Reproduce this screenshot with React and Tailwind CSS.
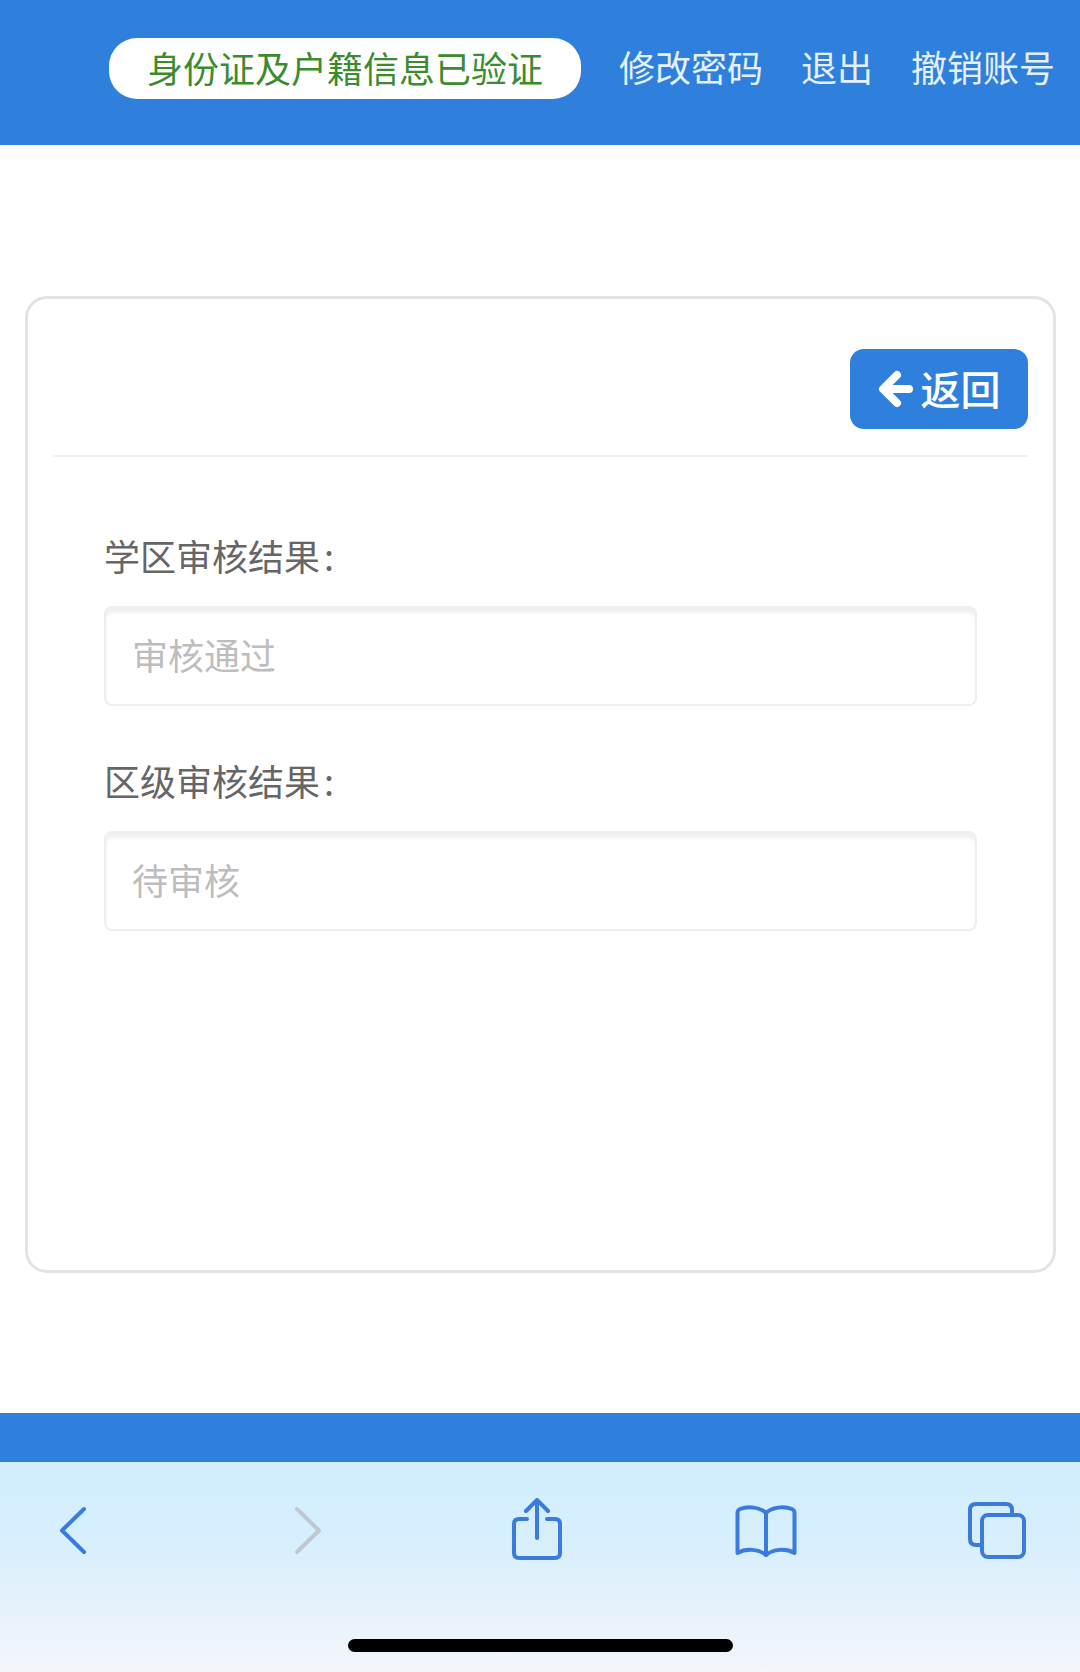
const fontStack = { fontFamily: '"Noto Sans CJK SC", "Noto Sans", sans-serif' };

function Field({ label, value }) {
  return (
    <div className="mb-[49px]">
      <div className="h-[50px] text-[36px] leading-[50px] text-[#666] mb-[26px]">
        {label}
        <span className="ml-[4px]">:</span>
      </div>
      <input
        readOnly
        placeholder={value}
        className="block w-full h-[100px] px-[26px] pb-[4px] text-[36px] rounded-[8px] bg-white border-2 border-[#eeeeee] shadow-[inset_0_5px_3px_rgba(0,0,0,0.06)] placeholder:text-[#bdbdbd] outline-none"
      />
    </div>
  );
}

function IconStroke({ w, h, viewBox, className, children }) {
  return (
    <svg
      width={w}
      height={h}
      viewBox={viewBox}
      fill="none"
      strokeWidth="4"
      strokeLinecap="round"
      strokeLinejoin="round"
      className={className}
    >
      {children}
    </svg>
  );
}

export default function App() {
  return (
    <div className="w-[1080px] h-[1672px] flex flex-col bg-white overflow-hidden" style={fontStack}>
      {/* Header */}
      <header className="h-[145px] bg-[#2f80dc] flex items-start pt-[38px] pl-[109px] text-[36px]">
        <div className="w-[472px] h-[61px] pb-[4px] rounded-[28px] bg-white flex items-center justify-center text-[#3d8b2f]">
          身份证及户籍信息已验证
        </div>
        <a className="ml-[38px] h-[61px] leading-[57px] text-[#e4f1fb]">修改密码</a>
        <a className="ml-[38px] h-[61px] leading-[57px] text-[#e4f1fb]">退出</a>
        <a className="ml-[38px] h-[61px] leading-[57px] text-[#e4f1fb]">撤销账号</a>
      </header>

      {/* Main */}
      <main className="flex-1 px-[25px] pt-[151px]">
        <div className="w-[1031px] h-[977px] border-[3px] border-[#e3e3e3] rounded-[22px] px-[25px] pt-[50px]">
          <div className="flex justify-end h-[108px] border-b-2 border-[#f0f0f0]">
            <button className="w-[178px] h-[80px] pb-[2px] rounded-[14px] bg-[#2f80dc] text-white text-[40px] font-medium flex items-center justify-center gap-[7px]">
              <svg
                width="36"
                height="38"
                viewBox="0 0 36 38"
                fill="none"
                stroke="currentColor"
                strokeWidth="8"
                strokeLinecap="round"
                strokeLinejoin="round"
                className="mt-[2px]"
              >
                <path d="M31 19 H7 M19 5 L5 19 L19 33" />
              </svg>
              返回
            </button>
          </div>
          <div className="px-[51px] pt-[73px]">
            <Field label="学区审核结果" value="审核通过" />
            <Field label="区级审核结果" value="待审核" />
          </div>
        </div>
      </main>

      {/* Bottom bar */}
      <div className="h-[49px] bg-[#2f80dc]" />

      {/* Browser toolbar */}
      <div className="h-[210px] bg-gradient-to-b from-[#d0eefd] via-[#d8effd] via-40% to-[#f3f6fb] flex flex-col">
        <div className="h-[177px] flex items-start">
          <IconStroke w={29} h={49} viewBox="0 0 29 49" className="ml-[58px] mt-[44px] stroke-[#3a7bdc]">
            <path d="M26 3 L4 24.5 L26 46" />
          </IconStroke>
          <IconStroke w={29} h={49} viewBox="0 0 29 49" className="ml-[207px] mt-[44px] stroke-[#bfc8d0]">
            <path d="M3 3 L25 24.5 L3 46" />
          </IconStroke>
          <IconStroke w={50} h={63} viewBox="0 0 50 63" className="ml-[189px] mt-[36px] stroke-[#3a7bdc]">
            <path d="M25 40 V3 M14 13 L25 2 L36 13" />
            <path d="M15 21 H7 Q2 21 2 26 V55 Q2 60 7 60 H43 Q48 60 48 55 V26 Q48 21 43 21 H35" />
          </IconStroke>
          <IconStroke w={62} h={54} viewBox="0 0 62 54" className="ml-[173px] mt-[42px] stroke-[#3a7bdc]">
            <path d="M31 9 C25 3 13 2 5 5 Q2.5 6 2.5 9 V49 C11 44 24 45 31 51 C38 45 51 44 59.5 49 V9 Q59.5 6 57 5 C49 2 37 3 31 9 Z" />
            <path d="M31 9 V51" />
          </IconStroke>
          <IconStroke w={60} h={59} viewBox="0 0 60 59" className="ml-[170px] mt-[39px] stroke-[#3a7bdc]">
            <path d="M45 13 V9 Q45 3 39 3 H9 Q3 3 3 9 V38 Q3 44 9 44 H15" />
            <rect x="15" y="14" width="42" height="42" rx="6" />
          </IconStroke>
        </div>
        <div className="mx-auto w-[385px] h-[13px] rounded-full bg-black" />
      </div>
    </div>
  );
}
